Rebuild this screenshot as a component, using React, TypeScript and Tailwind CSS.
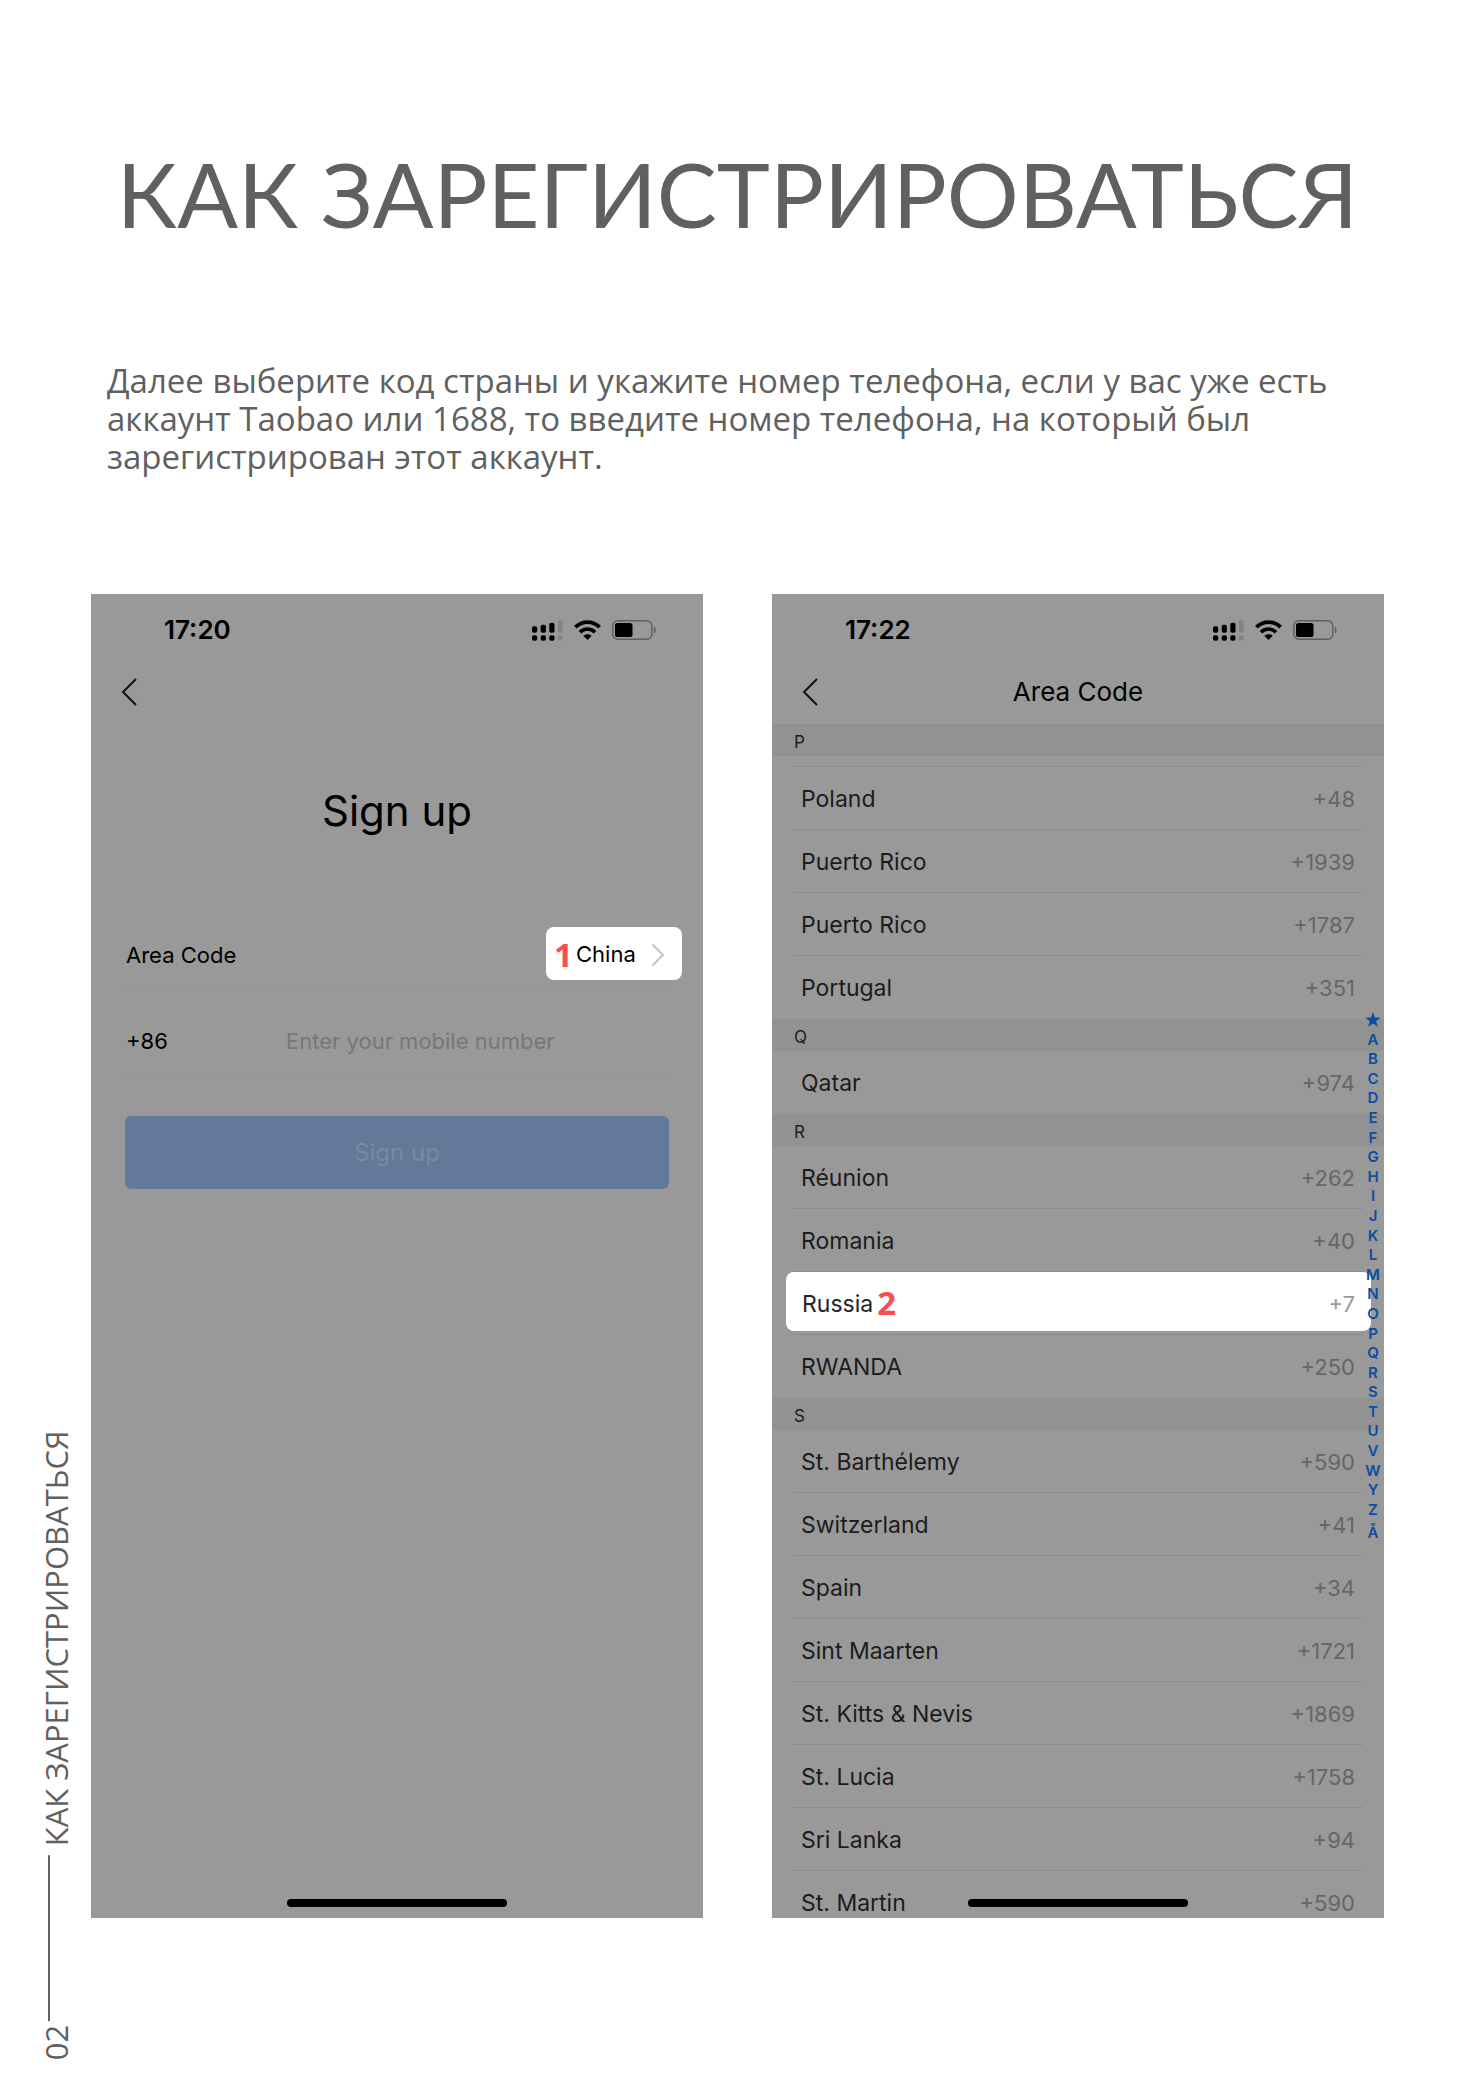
import React from "react";

type Country = { name: string; code: string; step?: string };
type Section = { letter: string; rows: Country[] };

const sections: Section[] = [
  {
    letter: "Q",
    rows: [{ name: "Qatar", code: "+974" }],
  },
  {
    letter: "R",
    rows: [
      { name: "Réunion", code: "+262" },
      { name: "Romania", code: "+40" },
      { name: "Russia", code: "+7", step: "2" },
      { name: "RWANDA", code: "+250" },
    ],
  },
  {
    letter: "S",
    rows: [
      { name: "St. Barthélemy", code: "+590" },
      { name: "Switzerland", code: "+41" },
      { name: "Spain", code: "+34" },
      { name: "Sint Maarten", code: "+1721" },
      { name: "St. Kitts & Nevis", code: "+1869" },
      { name: "St. Lucia", code: "+1758" },
      { name: "Sri Lanka", code: "+94" },
      { name: "St. Martin", code: "+590" },
    ],
  },
];

const sectionP: Country[] = [
  { name: "Poland", code: "+48" },
  { name: "Puerto Rico", code: "+1939" },
  { name: "Puerto Rico", code: "+1787" },
  { name: "Portugal", code: "+351" },
];

const indexLetters = "ABCDEFGHIJKLMNOPQRSTUVWYZÅ".split("");

function SignalIcon() {
  return (
    <svg width="31" height="21" viewBox="0 0 31 21" aria-hidden="true">
      <rect x="0" y="6.300" width="5.200" height="6.400" rx="1.800" fill="#000" />
      <rect x="8.700" y="4.700" width="5.200" height="8" rx="1.800" fill="#000" />
      <rect x="17.300" y="2.700" width="5.200" height="10" rx="1.800" fill="#000" />
      <rect x="26" y="0.300" width="4.600" height="12.400" rx="1.500" fill="#838383" />
      <rect x="0" y="15.300" width="5.200" height="5.500" rx="1.800" fill="#000" />
      <rect x="8.700" y="15.300" width="5.200" height="5.500" rx="1.800" fill="#000" />
      <rect x="17.300" y="15.300" width="5.200" height="5.500" rx="1.800" fill="#000" />
      <rect x="26" y="15.300" width="4.600" height="5.200" rx="1.500" fill="#838383" />
    </svg>
  );
}

function WifiIcon() {
  return (
    <svg width="27" height="20" viewBox="0 0 27 20" fill="none" stroke="#000" aria-hidden="true">
      <path d="M1.400 7.200C8.200.4 18.800.4 25.600 7.200" strokeWidth="3.800" />
      <path d="M6 12.200c4.200-4.200 10.800-4.200 15 0" strokeWidth="3.600" />
      <path d="M13.500 20l-4.200-4.300c2.400-2.100 6-2.100 8.400 0z" fill="#000" stroke="none" />
    </svg>
  );
}

function BatteryIcon() {
  return (
    <svg width="44" height="20" viewBox="0 0 44 20" aria-hidden="true">
      <rect x="0.800" y="0.800" width="39" height="18.400" rx="5" fill="none" stroke="#5f5f5f" strokeWidth="1.400" />
      <rect x="3" y="3" width="17.500" height="14" rx="2.600" fill="#000" />
      <path d="M41.800 6.500c2.400 1 2.400 6 0 7z" fill="#5f5f5f" />
    </svg>
  );
}

function StatusBar({ time }: { time: string }) {
  return (
    <div className="flex h-[72px] items-center justify-between pl-[73px] pr-[47px]">
      <time className="text-[26px] font-semibold leading-8">{time}</time>
      <div className="flex items-center gap-[11px]">
        <SignalIcon />
        <WifiIcon />
        <BatteryIcon />
      </div>
    </div>
  );
}

function BackButton() {
  return (
    <button type="button" aria-label="Back" className="flex h-12 w-12 items-center justify-center">
      <svg width="18" height="30" viewBox="0 0 18 30" fill="none" stroke="#111" strokeWidth="2" aria-hidden="true">
        <path d="M16 2L3 15l13 13" />
      </svg>
    </button>
  );
}

function HomeBar() {
  return <div className="absolute inset-x-0 bottom-[11px] mx-auto h-2 w-[36%] rounded-full bg-black" />;
}

function Phone({ children }: { children: React.ReactNode }) {
  return (
    <section className="relative aspect-[612/1324] overflow-hidden bg-[#999999] font-['Inter',sans-serif] text-black">
      {children}
      <HomeBar />
    </section>
  );
}

function SignUpScreen() {
  return (
    <Phone>
      <StatusBar time="17:20" />
      <div className="flex h-[52px] items-center pl-[14px]">
        <BackButton />
      </div>
      <h2 className="mt-16 text-center text-[42px] leading-[58px]">Sign up</h2>
      <form className="mt-[79px] text-[22px]" onSubmit={(e) => e.preventDefault()}>
        <div className="mx-[31px] flex h-[66px] items-center justify-between border-b border-[#959595] pl-1 pt-[7px]">
          <span id="area-label">Area Code</span>
          <button
            type="button"
            aria-labelledby="area-label area-value"
            className="-mr-[10px] mb-1 flex h-[53px] w-[136px] items-center rounded-lg bg-white pl-2 pt-[3px]"
          >
            <span className="w-[22px] text-left font-['Open_Sans',sans-serif] text-[33px] font-bold text-[#f94d50]">1</span>
            <span id="area-value" className="flex-1 text-left">
              China
            </span>
            <svg className="mr-[17px]" width="14" height="24" viewBox="0 0 14 24" fill="none" stroke="#c4c4c4" strokeWidth="2" aria-hidden="true">
              <path d="M1.500 1.500L12 12 1.500 22.500" />
            </svg>
          </button>
        </div>
        <div className="mx-[31px] flex h-[88px] items-center border-b border-[#959595] pl-1 pt-[26px]">
          <label htmlFor="mobile" className="w-[160px]">
            +86
          </label>
          <input
            id="mobile"
            type="tel"
            placeholder="Enter your mobile number"
            className="min-w-0 flex-1 bg-transparent outline-none placeholder:text-[#777777]"
          />
        </div>
        <div className="px-[34px] pt-[43px]">
          <button type="submit" className="h-[73px] w-full rounded-md bg-[#627999] text-[24px] text-[#7a8a9f]">
            Sign up
          </button>
        </div>
      </form>
    </Phone>
  );
}

function SectionHeader({ letter }: { letter: string }) {
  return <h3 className="h-8 bg-[#929292] pl-[22px] text-[17px] leading-9 text-[#1c1c1c]">{letter}</h3>;
}

function CountryList({ rows, topLine = false }: { rows: Country[]; topLine?: boolean }) {
  return (
    <ul className={topLine ? "mx-[21px] border-t border-[#8c8c8c]" : "mx-[21px]"}>
      {rows.map((row, i) => (
        <li key={i} className="h-[63px] border-b border-[#8c8c8c] last:border-transparent">
          {row.step ? (
            <button type="button" className="-mx-[7px] flex h-[59px] w-[calc(100%_+_15px)] items-center rounded-lg bg-white pl-4 pr-4 pt-[6px]">
              <span className="text-[#22252b]">{row.name}</span>
              <span className="ml-1 flex-1 pb-1 text-left font-['Open_Sans',sans-serif] text-[33px] font-bold leading-10 text-[#f94d50]">
                {row.step}
              </span>
              <span className="text-[22px] text-[#999999]">{row.code}</span>
            </button>
          ) : (
            <button type="button" className="flex h-full w-full items-center justify-between px-2 pt-[2px]">
              <span className="text-[#1c1c1c]">{row.name}</span>
              <span className="text-[22px] text-[#666666]">{row.code}</span>
            </button>
          )}
        </li>
      ))}
    </ul>
  );
}

function AreaCodeScreen() {
  return (
    <Phone>
      <StatusBar time="17:22" />
      <div className="grid h-[58px] grid-cols-[48px_1fr_48px] items-center px-[14px] pb-[6px]">
        <BackButton />
        <h2 className="text-center text-[26px] leading-9">Area Code</h2>
      </div>
      <div className="text-[23px]">
        <SectionHeader letter="P" />
        <div className="pt-[10px]">
          <CountryList rows={sectionP} topLine />
        </div>
        {sections.map((s) => (
          <div key={s.letter}>
            <SectionHeader letter={s.letter} />
            <CountryList rows={s.rows} />
          </div>
        ))}
      </div>
      <nav
        aria-label="Alphabet index"
        className="absolute right-0 top-[416px] flex h-[533px] w-[22px] flex-col text-center text-[15px] font-semibold leading-5 text-[#0b4da2]"
      >
        <a href="#top" aria-label="Favourites" className="flex flex-1 items-center justify-center">
          <svg width="16" height="15" viewBox="0 0 24 23" fill="currentColor" aria-hidden="true">
            <path d="M12 0l2.900 8.600H24l-7.300 5.400 2.700 8.800L12 17.500l-7.400 5.300L7.300 14 0 8.600h9.100z" />
          </svg>
        </a>
        {indexLetters.map((l) => (
          <a key={l} href={"#" + l} className="min-h-0 flex-1 last:pt-1">
            {l}
          </a>
        ))}
      </nav>
    </Phone>
  );
}

export default function App() {
  return (
    <div className="flex min-h-screen bg-white font-['Open_Sans',sans-serif] text-[#606060]">
      <aside className="flex w-[91px] flex-col justify-end pb-[33px] pl-9">
        <div className="flex rotate-180 items-center self-start text-[31px] leading-10 [writing-mode:vertical-rl]">
          <span>02</span>
          <span className="mb-[9px] mr-3 mt-1 h-[166px] w-[2px] self-start bg-[#606060]" />
          <span>КАК ЗАРЕГИСТРИРОВАТЬСЯ</span>
        </div>
      </aside>
      <main className="flex-1 pb-16 pr-24 pt-[142px]">
        <h1 className="whitespace-nowrap text-center font-['Lato',sans-serif] text-[90px] leading-[102px]">
          КАК ЗАРЕГИСТРИРОВАТЬСЯ
        </h1>
        <p className="mt-[118px] pl-4 text-[33px] leading-[38px]">
          Далее выберите код страны и укажите номер телефона, если у вас уже есть аккаунт Taobao или 1688, то введите номер
          телефона, на который был зарегистрирован этот аккаунт.
        </p>
        <div className="mt-[118px] grid grid-cols-2 gap-[69px]">
          <SignUpScreen />
          <AreaCodeScreen />
        </div>
      </main>
    </div>
  );
}
